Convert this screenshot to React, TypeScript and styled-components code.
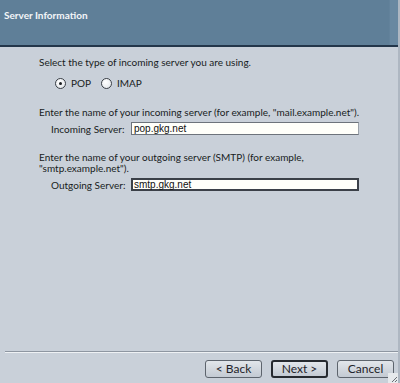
import React from 'react';
import styled, { createGlobalStyle } from 'styled-components';

const colors = {
  header: '#5f7f98',
  headerEdge: '#23364a',
  body: '#c9d0d9',
  text: '#181c22',
  field: '#fffffa',
};

const GlobalStyle = createGlobalStyle`
  html, body {
    margin: 0;
    padding: 0;
    background: ${colors.body};
  }
  body {
    font-family: "Lato", "Liberation Sans", sans-serif;
  }
`;

const Window = styled.div`
  position: relative;
  width: 400px;
  height: 383px;
  display: flex;
  flex-direction: column;
  background: ${colors.body};
  box-sizing: border-box;
  border-right: 2px solid #aeb7c2;
  overflow: hidden;
`;

const Header = styled.div`
  height: 47px;
  flex-shrink: 0;
  background: linear-gradient(to right, ${colors.header} 97.8%, #6988a1 98%);
  border-bottom: 2px solid ${colors.headerEdge};
  padding: 9px 0 0 4px;
  box-sizing: border-box;
`;

const Title = styled.div`
  color: #f4f6f8;
  font-size: 10px;
  font-weight: 700;
`;

const Content = styled.div`
  flex: 1;
  padding: 10px 0 0 39px;
  color: ${colors.text};
  font-size: 10px;
`;

const Prompt = styled.div<{ $gap?: number }>`
  line-height: 11px;
  margin-bottom: ${p => p.$gap ?? 4}px;
`;

const RadioRow = styled.div`
  display: flex;
  gap: 10px;
  padding-left: 16px;
  margin-bottom: 18px;
`;

const RadioLabel = styled.label`
  display: flex;
  align-items: center;
  gap: 5px;
  font-size: 10px;
  line-height: 12px;
`;

const RadioCircle = styled.span<{ $checked?: boolean }>`
  width: 9px;
  height: 9px;
  border-radius: 50%;
  border: 1px solid #3a3f46;
  background: radial-gradient(circle at 40% 35%, #ffffff, #dfe3e8);
  display: flex;
  align-items: center;
  justify-content: center;

  &::after {
    content: '';
    width: 3px;
    height: 3px;
    border-radius: 50%;
    background: ${p => (p.$checked ? '#1b1e22' : 'transparent')};
  }
`;

const FieldRow = styled.div`
  display: flex;
  align-items: center;
  padding-left: 12px;
  margin-bottom: 17px;
`;

const FieldLabel = styled.span`
  width: 80px;
`;

const TextField = styled.div<{ $focused?: boolean }>`
  width: 228px;
  height: 13px;
  box-sizing: border-box;
  background: ${colors.field};
  border: ${p => (p.$focused ? '2px solid #3b4048' : '1px solid #6d737b')};
  border-right-color: ${p => (p.$focused ? '#3b4048' : '#9aa1aa')};
  font-family: "Liberation Sans", sans-serif;
  font-size: 10px;
  line-height: ${p => (p.$focused ? 9 : 11)}px;
  padding-left: ${p => (p.$focused ? 1 : 2)}px;
  color: #111;
`;

const Footer = styled.div`
  padding: 0 0 5px 5px;
`;

const Separator = styled.div`
  height: 1px;
  background: #8e96a1;
  border-bottom: 1px solid #eef1f4;
  margin-bottom: 7px;
`;

const ButtonRow = styled.div`
  display: flex;
  justify-content: flex-end;
  gap: 9px;
  padding-right: 4px;
`;

const Button = styled.button<{ $default?: boolean }>`
  width: 57px;
  height: 18px;
  box-sizing: border-box;
  border-radius: 3px;
  border: ${p => (p.$default ? '2px solid #262a30' : '1px solid #5d646d')};
  background: linear-gradient(#e2e6eb, #c3cad3);
  font-family: "Lato", "Liberation Sans", sans-serif;
  font-size: 12px;
  color: #1e232a;
  padding: 0;
  line-height: 14px;
`;

const Grip = styled.svg`
  position: absolute;
  right: 0;
  bottom: 0;
  width: 10px;
  height: 10px;
  background: #e6e9ec;
`;

const App: React.FC = () => {
  return (
    <>
      <GlobalStyle />
      <Window>
        <Header>
          <Title>Server Information</Title>
        </Header>
        <Content>
          <Prompt $gap={9}>Select the type of incoming server you are using.</Prompt>
          <RadioRow>
            <RadioLabel>
              <RadioCircle $checked />
              POP
            </RadioLabel>
            <RadioLabel>
              <RadioCircle />
              IMAP
            </RadioLabel>
          </RadioRow>
          <Prompt>Enter the name of your incoming server (for example, "mail.example.net").</Prompt>
          <FieldRow>
            <FieldLabel>Incoming Server:</FieldLabel>
            <TextField>pop.gkg.net</TextField>
          </FieldRow>
          <Prompt>
            Enter the name of your outgoing server (SMTP) (for example,
            <br />
            "smtp.example.net").
          </Prompt>
          <FieldRow>
            <FieldLabel>Outgoing Server:</FieldLabel>
            <TextField $focused>smtp.gkg.net</TextField>
          </FieldRow>
        </Content>
        <Footer>
          <Separator />
          <ButtonRow>
            <Button>&lt; Back</Button>
            <Button $default>Next &gt;</Button>
            <Button>Cancel</Button>
          </ButtonRow>
        </Footer>
        <Grip viewBox="0 0 10 10">
          <path d="M4 9 L9 4 M7 9 L9 7" stroke="#6a6f76" strokeWidth="1" />
        </Grip>
      </Window>
    </>
  );
};

export default App;
